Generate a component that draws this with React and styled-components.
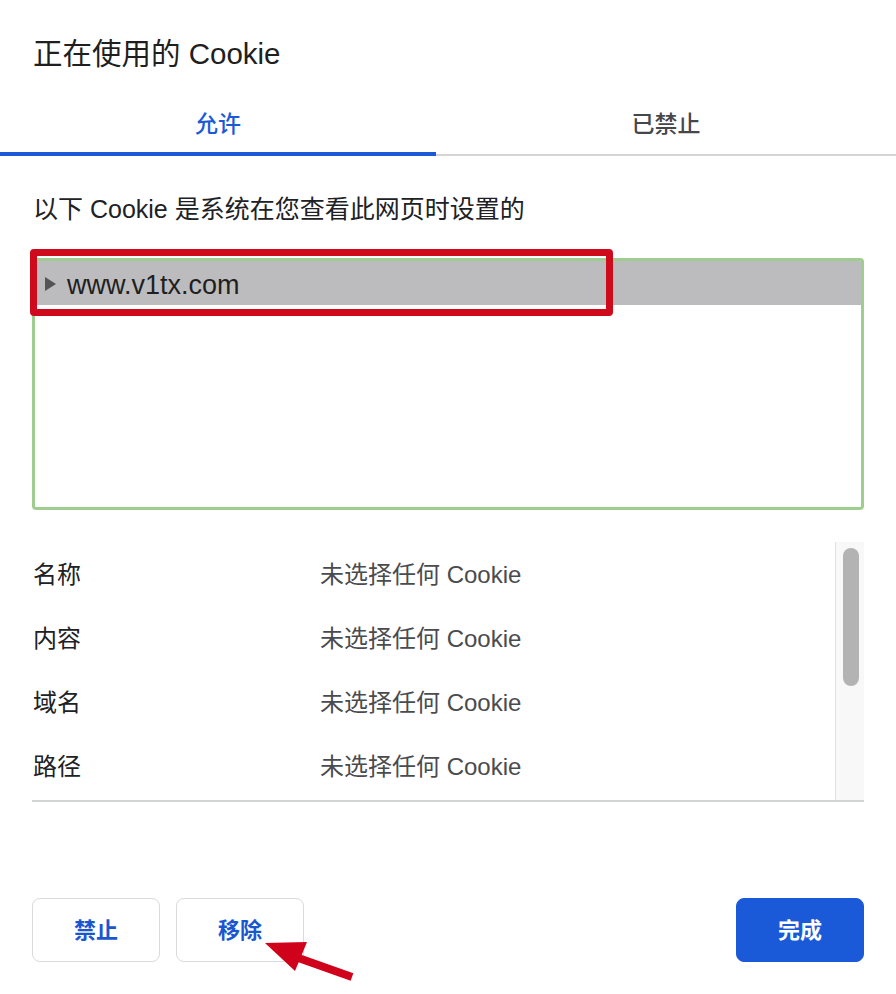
import React from 'react'
import styled, { createGlobalStyle } from 'styled-components'

const GlobalStyle = createGlobalStyle`
  html, body {
    margin: 0;
    padding: 0;
    background: #ffffff;
  }
  body {
    font-family: "Liberation Sans", "Noto Sans CJK SC", sans-serif;
    color: #202124;
  }
`;

const Dialog = styled.div`
  position: relative;
  width: 896px;
  height: 994px;
  background: #fff;
  overflow: hidden;
`;

const Title = styled.h1`
  margin: 0;
  padding: 35px 0 0 33px;
  font-size: 29.5px;
  line-height: 38px;
  font-weight: 400;
  color: #1f1f1f;
`;

const TabBar = styled.div`
  display: grid;
  grid-template-columns: 436px 1fr;
  margin-top: 21px;
  border-bottom: 2px solid #d5d5d5;
`;

const Tab = styled.div`
  height: 62px;
  box-sizing: border-box;
  margin-bottom: -2px;
  padding-bottom: 2px;
  display: flex;
  align-items: center;
  justify-content: center;
  font-size: 23px;
  font-weight: 500;
  color: ${p => (p.$active ? '#1a5ad6' : '#45474b')};
  border-bottom: 4px solid ${p => (p.$active ? '#1a5ad6' : 'transparent')};
`;

const Description = styled.p`
  margin: 35px 0 0 33px;
  font-size: 25px;
  line-height: 36px;
  color: #202124;
`;

const TreeWrap = styled.div`
  position: relative;
  margin: 31px 32px 0;
`;

const TreeBox = styled.div`
  height: 252px;
  box-sizing: border-box;
  border: 3px solid #9fcd8f;
  border-radius: 4px;
  overflow: hidden;
`;

const TreeRow = styled.div`
  height: 44px;
  box-sizing: border-box;
  padding-top: 5px;
  display: flex;
  align-items: center;
  gap: 11px;
  padding-left: 10px;
  background: ${p => (p.$selected ? '#bcbcbe' : 'transparent')};
  font-size: 27px;
  color: #1f1f1f;
`;

const Caret = styled.span`
  width: 0;
  height: 0;
  margin-top: -3px;
  border-top: 7px solid transparent;
  border-bottom: 7px solid transparent;
  border-left: 11px solid #545456;
`;

const Highlight = styled.div`
  position: absolute;
  left: -2px;
  top: -9px;
  width: 583px;
  height: 67px;
  box-sizing: border-box;
  border: 7px solid #cf0a1c;
  border-radius: 4px;
  pointer-events: none;
`;

const Details = styled.div`
  display: flex;
  margin: 32px 32px 0;
  height: 258px;
  border-bottom: 2px solid #d2d5d5;
`;

const DetailList = styled.div`
  flex: 1;
  padding-top: 1px;
`;

const DetailRow = styled.div`
  display: grid;
  grid-template-columns: 288px 1fr;
  align-items: center;
  height: 64px;
  box-sizing: border-box;
  padding-bottom: 6px;
  font-size: 24px;
`;

const Label = styled.span`
  padding-left: 1px;
  color: #202124;
`;

const Value = styled.span`
  color: #4a4b4e;
`;

const ScrollTrack = styled.div`
  width: 29px;
  box-sizing: border-box;
  background: #f8f8f8;
  border-left: 1px solid #e2e2e2;
  padding: 6px 0 0 7px;
`;

const ScrollThumb = styled.div`
  width: 16px;
  height: 138px;
  border-radius: 8px;
  background: #b3b3b3;
`;

const Footer = styled.div`
  display: flex;
  gap: 16px;
  margin: 96px 32px 0;
`;

const Button = styled.button`
  width: 128px;
  height: 64px;
  box-sizing: border-box;
  padding: 0 0 4px;
  border-radius: 8px;
  font-family: inherit;
  font-size: 22px;
  font-weight: 700;
  cursor: pointer;
  border: 1px solid ${p => (p.$primary ? '#1a5ad9' : '#d9dadd')};
  background: ${p => (p.$primary ? '#1a5ad9' : '#ffffff')};
  color: ${p => (p.$primary ? '#ffffff' : '#1a56d0')};
  margin-left: ${p => (p.$push ? 'auto' : '0')};
`;

const Arrow = styled.svg`
  position: absolute;
  left: 0;
  top: 0;
  pointer-events: none;
`;

const fields = ['名称', '内容', '域名', '路径'];

const App = () => {
  return (
    <Dialog>
      <GlobalStyle />
      <Title>正在使用的 Cookie</Title>
      <TabBar>
        <Tab $active>允许</Tab>
        <Tab>已禁止</Tab>
      </TabBar>
      <Description>以下 Cookie 是系统在您查看此网页时设置的</Description>
      <TreeWrap>
        <TreeBox>
          <TreeRow $selected>
            <Caret />
            www.v1tx.com
          </TreeRow>
        </TreeBox>
        <Highlight />
      </TreeWrap>
      <Details>
        <DetailList>
          {fields.map(f => (
            <DetailRow key={f}>
              <Label>{f}</Label>
              <Value>未选择任何 Cookie</Value>
            </DetailRow>
          ))}
        </DetailList>
        <ScrollTrack>
          <ScrollThumb />
        </ScrollTrack>
      </Details>
      <Footer>
        <Button>禁止</Button>
        <Button>移除</Button>
        <Button $primary $push>完成</Button>
      </Footer>
      <Arrow width="896" height="994" viewBox="0 0 896 994">
        <line x1="290" y1="955" x2="352" y2="977" stroke="#d0021b" strokeWidth="8" />
        <polygon points="265,943 307,942 295,971" fill="#d0021b" />
      </Arrow>
    </Dialog>
  );
};

export default App
